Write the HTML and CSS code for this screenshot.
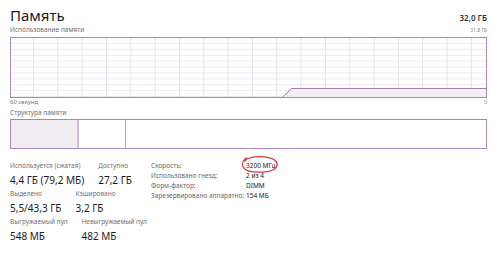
FILE: index.html
```html
<!DOCTYPE html>
<html lang="ru">
<head>
  <meta charset="UTF-8" />
  <title>Память</title>
  <link rel="stylesheet" href="styles.css">
</head>
<body>
  <div class="page">
    <div class="head">
      <h1 class="title">Память</h1>
      <span class="total">32,0 ГБ</span>
    </div>

    <div class="caption-row top">
      <span>Использование памяти</span>
      <span class="tiny">31,8 ГБ</span>
    </div>
    <div class="graph">
      <svg viewBox="0 0 476 59" preserveAspectRatio="none">
        <polygon points="273,59 281,50 476,50 476,59" fill="#f3edf6"/>
        <polyline points="272,59.5 281,50.5 476,50.5" fill="none" stroke="#a57db6" stroke-width="1"/>
      </svg>
    </div>
    <div class="caption-row axis">
      <span>60 секунд</span>
      <span class="tiny">0</span>
    </div>

    <div class="caption">Структура памяти</div>
    <div class="structure">
      <div class="seg used"></div>
      <div class="seg modified"></div>
      <div class="seg free"></div>
    </div>

    <div class="stats">
      <div class="main-stats">
        <div class="stat-row">
          <div class="stat"><div class="label">Используется (сжатая)</div><div class="value">4,4 ГБ (79,2 МБ)</div></div>
          <div class="stat"><div class="label">Доступно</div><div class="value">27,2 ГБ</div></div>
        </div>
        <div class="stat-row">
          <div class="stat"><div class="label">Выделено</div><div class="value">5,5/43,3 ГБ</div></div>
          <div class="stat"><div class="label">Кэшировано</div><div class="value">3,2 ГБ</div></div>
        </div>
        <div class="stat-row">
          <div class="stat"><div class="label">Выгружаемый пул</div><div class="value">548 МБ</div></div>
          <div class="stat"><div class="label">Невыгружаемый пул</div><div class="value">482 МБ</div></div>
        </div>
      </div>

      <div class="info">
        <span class="info-label">Скорость:</span>
        <span class="info-value marked">3200 МГц
          <svg class="circle" viewBox="0 0 40 20">
            <path d="M6 3 C2 5 1 9 2 12 C4 17 14 18.5 24 18 C33 17.5 38.5 14 38 9.5 C37.5 4.5 30 1.8 20 1.8 C12 1.8 6 3.5 4 6.5" fill="none" stroke="#d7383d" stroke-width="1.3" stroke-linecap="round"/>
          </svg>
        </span>
        <span class="info-label">Использовано гнезд:</span>
        <span class="info-value">2 из 4</span>
        <span class="info-label">Форм-фактор:</span>
        <span class="info-value">DIMM</span>
        <span class="info-label">Зарезервировано аппаратно:</span>
        <span class="info-value">154 МБ</span>
      </div>
    </div>
  </div>
</body>
</html>
```

FILE: styles.css
```css
body { margin: 0; background: #fff; font-family: "Noto Sans", "Open Sans", sans-serif; color: #1b1b1b; }
.page { padding: 5px 13px 0 10px; }

.head { display: flex; justify-content: space-between; align-items: baseline; height: 20px; margin-bottom: 1px; }
.title { margin: 0; font-size: 15px; font-weight: normal; line-height: 20px; }
.total { font-size: 8px; font-weight: 600; color: #333; }

.caption-row { display: flex; justify-content: space-between; align-items: center; font-size: 6.5px; line-height: 8px; height: 8px; color: #6f6f6f; }
.caption-row.top { margin-bottom: 3px; }
.caption-row.axis { font-size: 6px; }
.tiny { font-size: 5px; color: #888; }

.graph {
  height: 59px;
  border: 1px solid #a986b9;
  background:
    linear-gradient(to right, #e6dfea 1px, transparent 1px) 22px 0 / 24.33px 100% repeat-x,
    linear-gradient(to bottom, #eee9f1 1px, transparent 1px) 0 5px / 100% 5.9px repeat-y,
    #fff;
}
.graph svg { display: block; width: 100%; height: 100%; }

.caption { font-size: 6.5px; line-height: 8px; color: #6f6f6f; margin-top: 3px; margin-bottom: 2px; }

.structure { display: flex; height: 28px; border: 1px solid #a986b9; }
.seg.used { width: 66px; background: #f1edf3; border-right: 2px solid #d3bcdd; }
.seg.modified { width: 46px; border-right: 1px solid #b99bc7; }
.seg.free { flex: 1; }

.stats { display: flex; margin-top: 12px; }
.main-stats { width: 141px; }
.stat-row { display: flex; gap: 14px; margin-bottom: 2px; }
.label { font-size: 6.5px; line-height: 9px; color: #707070; white-space: nowrap; }
.value { font-size: 10px; line-height: 14px; margin-top: 3px; white-space: nowrap; }

.info { display: grid; grid-template-columns: 95px auto; align-content: start; font-size: 6.5px; line-height: 10px; }
.info-label { color: #6a6a6a; white-space: nowrap; }
.info-value { color: #222; white-space: nowrap; }
.marked { position: relative; }
.circle { position: absolute; left: -5px; top: -6px; width: 38px; height: 19px; overflow: visible; }
```
